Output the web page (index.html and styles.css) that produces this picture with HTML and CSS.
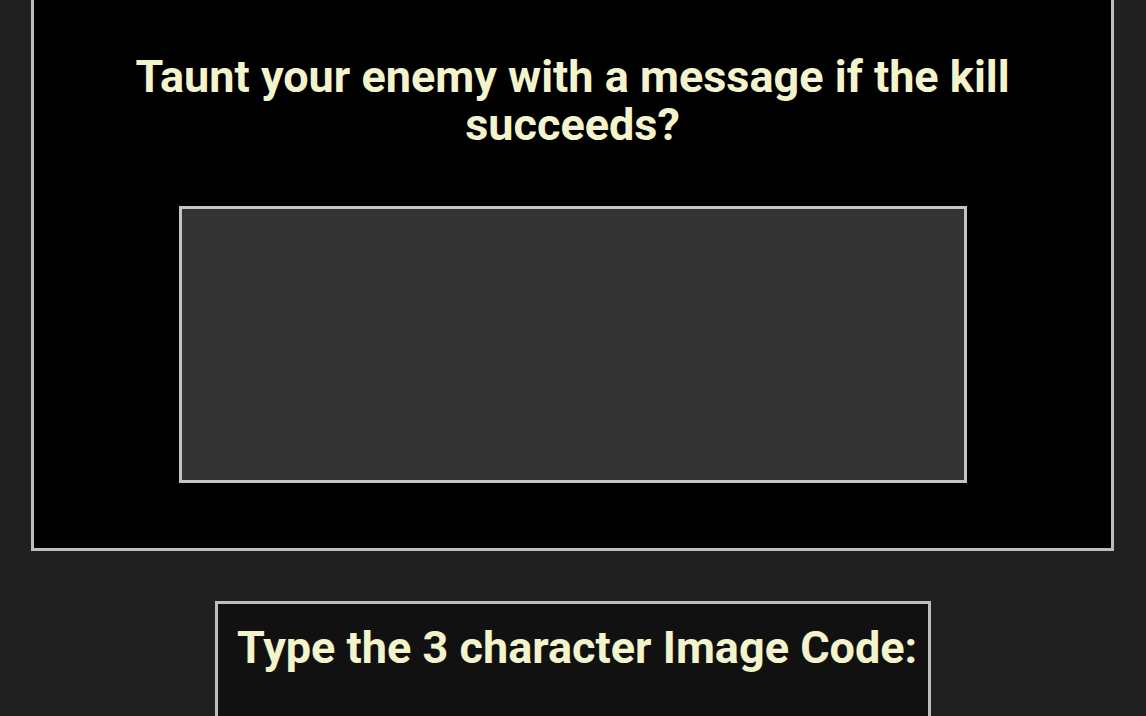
FILE: index.html
```html
<!DOCTYPE html>
<html>
<head>
<meta charset="utf-8">
<link rel="stylesheet" href="styles.css">
</head>
<body>
<div class="panel">
  <p class="question">Taunt your enemy with a message if the kill succeeds?</p>
  <div class="field"><textarea class="taunt"></textarea></div>
</div>
<div class="code-box">
  <p class="code-label">Type the 3 character Image Code:</p>
</div>
</body>
</html>
```

FILE: styles.css
```css
html, body {
  margin: 0;
  padding: 0;
  background: #202020;
  height: 716px;
  overflow: hidden;
}
body {
  font-family: Roboto, "Liberation Sans", sans-serif;
}
.panel {
  margin: -40px 32px 0 31px;
  border: 3px solid #bdbdbd;
  background: #000;
  padding: 0 0 65px;
  display: flex;
  flex-direction: column;
  align-items: center;
}
.question {
  margin: 90px 0 0;
  width: 950px;
  text-align: center;
  font-weight: 700;
  font-size: 45px;
  line-height: 48px;
  color: #f3f3cc;
}
.field {
  margin-top: 57px;
  display: flex;
  justify-content: center;
}
.taunt {
  display: block;
  box-sizing: border-box;
  width: 788px;
  height: 277px;
  border: 3px solid #c4c4c4;
  background: #333333;
  resize: none;
  outline: none;
  margin: 0;
  padding: 0;
}
.code-box {
  box-sizing: border-box;
  width: 716px;
  margin: 50px auto 0 215px;
  height: 200px;
  border: 3px solid #bdbdbd;
  background: #111111;
  padding: 20px 18px 0 19px;
}
.code-label {
  margin: 0;
  font-weight: 700;
  font-size: 45px;
  line-height: 48px;
  color: #f3f3cc;
  white-space: nowrap;
}
```
